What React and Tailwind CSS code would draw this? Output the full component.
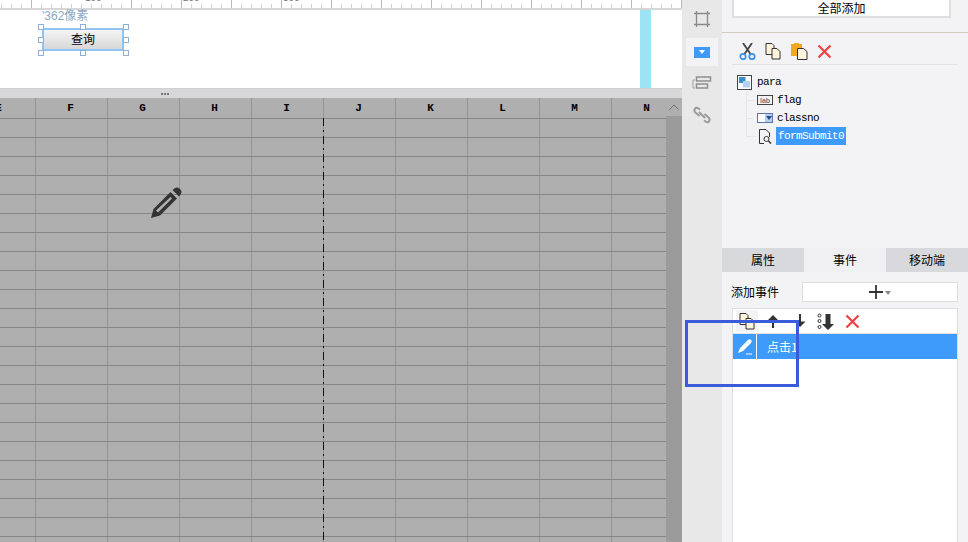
const COLS = ['E', 'F', 'G', 'H', 'I', 'J', 'K', 'L', 'M', 'N']
const ROWS = Array.from({ length: 23 }, (_, i) => i)
const mono = 'font-["Liberation_Mono","Noto_Sans_CJK_SC",monospace]'

function Ruler() {
  const ticks = Array.from({ length: 69 }, (_, i) => i * 10 + 1)
  return (
    <div className="h-[10px] shrink-0 bg-white border-b-2 border-[#d6d6d8]">
      <svg width="682" height="8" className="block">
        {ticks.map((x) => {
          const major = (x - 31) % 50 === 0 && x !== 81
          return <line key={x} x1={x + 0.5} x2={x + 0.5} y1={major ? 0 : 4} y2="8" stroke={major ? '#b8b8b8' : '#d2d2d2'} />
        })}
        <text x="85" y="1" fontSize="10" fill="#777" fontFamily="Liberation Sans">100</text>
        <text x="183" y="1" fontSize="10" fill="#777" fontFamily="Liberation Sans">200</text>
        <text x="283" y="1" fontSize="10" fill="#777" fontFamily="Liberation Sans">300</text>
      </svg>
    </div>
  )
}

function Handle({ className }) {
  return <span className={`absolute w-[6px] h-[6px] bg-white border border-[#8fb0d0] ${className}`} />
}

function QueryButton() {
  return (
    <div className="relative w-[82px] h-[23px] border-2 border-[#90c4f4] bg-gradient-to-b from-[#f4f4f4] to-[#d8d8d8] flex items-center justify-center pb-[2px] text-[12px] text-black font-['Noto_Sans_CJK_SC',sans-serif]">
      查询
      <Handle className="-left-[6px] -top-[6px]" />
      <Handle className="left-[36px] -top-[6px]" />
      <Handle className="-right-[7px] -top-[6px]" />
      <Handle className="-left-[6px] top-[7px]" />
      <Handle className="-right-[7px] top-[7px]" />
      <Handle className="-left-[6px] -bottom-[7px]" />
      <Handle className="left-[36px] -bottom-[7px]" />
      <Handle className="-right-[7px] -bottom-[7px]" />
    </div>
  )
}

function Sheet() {
  return (
    <div className="flex-1 min-h-0 flex bg-[#afafaf] relative">
      <div className="w-[666px] overflow-hidden">
        <div className="-ml-[36px] w-max">
          <div className={`flex h-[21px] border-b border-[#868686] text-[11px] text-black ${mono}`}>
            {COLS.map((c) => (
              <div key={c} className="w-[72px] shrink-0 border-r border-[#959595] pr-[2px] flex items-center justify-center font-bold">{c}</div>
            ))}
          </div>
          {ROWS.map((r) => (
            <div key={r} className="flex h-[19px] border-b border-[#868686]">
              {COLS.map((c) => (
                <div key={c} className="w-[72px] shrink-0 border-r border-[#959595]" />
              ))}
            </div>
          ))}
        </div>
      </div>
      <div className="w-[16px] flex flex-col bg-[#9b9b9b]">
        <div className="h-[18px] bg-[#afafaf] flex items-center justify-center">
          <svg width="10" height="6" viewBox="0 0 10 6"><path d="M0.5 5.5 5 1l4.5 4.5" fill="none" stroke="#6f6f6f" /></svg>
        </div>
      </div>
      <div className="absolute left-[323px] top-[20px] bottom-0 w-px bg-[repeating-linear-gradient(to_bottom,#111_0,#111_8px,transparent_8px,transparent_12px,#111_12px,#111_14px,transparent_14px,transparent_18px)]" />
      <svg className="absolute left-[150px] top-[89px]" width="32" height="32" viewBox="0 0 32 32">
        <path fill="#333" fillRule="evenodd" d="M1 31 3.500 22 20.500 5 27 11.500 10 28.500ZM6 23.500 8 25.500 22 11.500 20.500 10ZM22.500 3 25 1C27 0 28.500 0.500 30 2 31.500 3.500 32 5 31 7L29 9.500Z" />
      </svg>
    </div>
  )
}

function Rail() {
  return (
    <div className="w-[40px] shrink-0 bg-[#e8e8e8] flex flex-col items-center">
      <div className="h-[38px] w-full flex items-center justify-center">
        <svg width="16" height="16" viewBox="0 0 16 16" fill="none" stroke="#8a8a8a" strokeWidth="1.300">
          <path d="M2.500 0v16M13.500 0v16M0 2.500h16M0 13.500h16" />
        </svg>
      </div>
      <div className="h-[28px] w-[32px] bg-[#f3f3f6] flex items-center justify-center">
        <div className="w-[16px] h-[11px] bg-[#3f9bfb] flex items-center justify-center">
          <svg width="6" height="4" viewBox="0 0 6 4"><path d="M0 0h6L3 4Z" fill="#fff" /></svg>
        </div>
      </div>
      <div className="h-[34px] w-full flex items-center justify-center">
        <svg width="20" height="14" viewBox="0 0 20 14" fill="none">
          <path d="M3 4H1v8h2" stroke="#a0a0a0" />
          <rect x="4.500" y="1" width="14" height="4" stroke="#8f8f8f" strokeWidth="1.500" />
          <rect x="4.500" y="8" width="11" height="4" stroke="#8f8f8f" strokeWidth="1.500" />
        </svg>
      </div>
      <div className="h-[30px] w-full flex items-center justify-center">
        <svg width="18" height="18" viewBox="0 0 18 18" fill="none" stroke="#9a9a9a" strokeWidth="2">
          <path d="M7 3.500 5.500 2.500C4 1.500 2.500 1.500 1.800 3 1 4.500 1.500 6 3 7l3.500 3" />
          <path d="M11 14.500 12.500 15.500C14 16.500 15.500 16.500 16.200 15 17 13.500 16.500 12 15 11L11.500 8" />
          <path d="M6 6l6 6" />
        </svg>
      </div>
    </div>
  )
}

function Copy() {
  return (
    <svg width="17" height="17" viewBox="0 0 17 17">
      <path d="M1 .5h6l2 2v9H1Z" fill="#fff4dc" stroke="#333" />
      <path d="M7 5.500h5l3 3v7.500H7Z" fill="#fff4dc" stroke="#333" />
    </svg>
  )
}

function Cross({ size = 15 }) {
  return (
    <svg width={size} height={size} viewBox="0 0 15 15">
      <path d="M1.500 1.500l12 12M13.500 1.500l-12 12" stroke="#ee4444" strokeWidth="2.300" />
    </svg>
  )
}

function ObjectPanel() {
  return (
    <div className="h-[248px] shrink-0">
      <div className="h-[33px] border-b border-[#cfcbc0] pl-[10px]">
        <div className="w-[219px] h-[18px] bg-white border-2 border-t-0 border-[#dedede] flex items-center justify-center text-[12px] text-black font-['Noto_Sans_CJK_SC',sans-serif]">全部添加</div>
      </div>
      <div className="mx-[10px] h-[32px] pt-[10px] pl-[7px] flex items-start gap-[9px] border-b border-[#e2e2e4] w-[226px]">
        <svg width="17" height="17" viewBox="0 0 17 17" fill="none">
          <path d="M4 0l7.500 11M13 0 5.500 11" stroke="#444" strokeWidth="1.800" />
          <circle cx="4" cy="13.500" r="2.700" stroke="#3b8fe8" strokeWidth="1.700" />
          <circle cx="13" cy="13.500" r="2.700" stroke="#3b8fe8" strokeWidth="1.700" />
        </svg>
        <Copy />
        <svg width="17" height="17" viewBox="0 0 17 17">
          <path d="M0 1h3V0h5v1h3v12H0Z" fill="#f2a91e" />
          <path d="M6.500 5.500h6l3.500 3v8H6.500Z" fill="#fff4dc" stroke="#333" />
        </svg>
        <div className="pt-[1px]"><Cross /></div>
      </div>
      <div className={`relative pl-[15px] pt-[8px] text-[11px] tracking-[-0.6px] text-black ${mono}`}>
        <div className="h-[18px] flex items-center gap-[4px]">
          <svg width="16" height="15" viewBox="0 0 16 15">
            <rect x=".5" y=".5" width="14" height="14" fill="#fff" stroke="#444" />
            <rect x="2" y="2" width="6.500" height="6" fill="#3a8fc8" />
            <rect x="6" y="6" width="7" height="6.500" fill="#b4d0f0" />
          </svg>
          <span>para</span>
        </div>
        <div className="h-[18px] flex items-center gap-[4px] pl-[20px]">
          <div className="w-[16px] h-[10px] border border-[#444] flex items-center justify-center text-[7px] tracking-normal leading-none text-[#777] font-bold font-['Liberation_Sans',sans-serif]">lab</div>
          <span>flag</span>
        </div>
        <div className="h-[18px] flex items-center gap-[4px] pl-[20px]">
          <div className="w-[16px] h-[10px] border border-[#5a78a8] flex bg-white">
            <div className="w-[7px]" />
            <div className="flex-1 bg-[#b4d0f0] flex items-center justify-center">
              <svg width="6" height="4" viewBox="0 0 6 4"><path d="M0 0h6L3 4Z" fill="#2a4a80" /></svg>
            </div>
          </div>
          <span>classno</span>
        </div>
        <div className="h-[18px] flex items-center gap-[4px] pl-[21px]">
          <svg width="14" height="15" viewBox="0 0 14 15" fill="none" stroke="#333">
            <path d="M6 14.500H1.500V.5H8l3.500 3.500v4" />
            <circle cx="8.500" cy="10" r="2.500" />
            <path d="M10.500 12l2.500 2.500" strokeWidth="1.500" />
          </svg>
          <span className="bg-[#3f9bfb] text-white h-[18px] leading-[18px] px-[2px] w-[70px]">formSubmit0</span>
        </div>
        <div className="absolute left-[24px] top-[26px] w-px h-[46px] bg-[#e6e6e8]" />
        <div className="absolute left-[24px] top-[35px] w-[8px] h-px bg-[#e6e6e8]" />
        <div className="absolute left-[24px] top-[53px] w-[8px] h-px bg-[#e6e6e8]" />
        <div className="absolute left-[24px] top-[71px] w-[10px] h-px bg-[#e6e6e8]" />
      </div>
    </div>
  )
}

function EventPanel() {
  return (
    <div className="flex-1 min-h-0 flex flex-col font-['Noto_Sans_CJK_SC',sans-serif] text-[12px] text-black">
      <div className="flex h-[24px] shrink-0">
        <div className="w-[82px] bg-[#d8d9dc] flex items-center justify-center">属性</div>
        <div className="w-[82px] bg-[#f0f0f2] flex items-center justify-center">事件</div>
        <div className="w-[82px] bg-[#d8d9dc] flex items-center justify-center">移动端</div>
      </div>
      <div className="h-[36px] shrink-0 pt-[4px] pl-[9px] pr-[10px] flex items-center justify-between">
        <span>添加事件</span>
        <div className="w-[156px] h-[20px] bg-white border border-[#dedede] flex items-center justify-center gap-[2px]">
          <svg width="14" height="14" viewBox="0 0 14 14"><path d="M7 0v14M0 7h14" stroke="#333" strokeWidth="1.800" /></svg>
          <svg width="6" height="4" viewBox="0 0 6 4" className="mt-[2px]"><path d="M0 0h6L3 4Z" fill="#888" /></svg>
        </div>
      </div>
      <div className="flex-1 min-h-0 ml-[10px] mr-[10px] bg-white border border-[#dedede] border-b-0">
        <div className="h-[25px] pl-[3px] flex items-center border-b border-[#e2e2e4]">
          <div className="w-[22px] h-[22px] bg-[#f3f3f6] flex items-center justify-center"><Copy /></div>
          <svg width="12" height="14" viewBox="0 0 12 14" className="ml-[9px]"><path d="M6 1l5.500 5.500H7V14H5V6.500H.5Z" fill="#333" /></svg>
          <svg width="12" height="14" viewBox="0 0 12 14" className="ml-[15px]"><path d="M6 13 11.500 7.500H7V0H5v7.500H.5Z" fill="#333" /></svg>
          <svg width="17" height="17" viewBox="0 0 17 17" className="ml-[11px]">
            <g fill="none" stroke="#333"><circle cx="2.500" cy="2.500" r="1.500" /><circle cx="2.500" cy="8" r="1.500" /><circle cx="2.500" cy="14" r="1.500" /></g>
            <path d="M11 17l6-6h-3.500V1h-5v10H5Z" fill="#333" />
          </svg>
          <div className="ml-[11px]"><Cross /></div>
        </div>
        <div className="h-[25px] bg-[#3f9bfb] flex text-white">
          <div className="w-[24px] border-r border-white flex items-center justify-center">
            <svg width="16" height="16" viewBox="0 0 16 16" fill="#fff">
              <path d="M1 14 3 9 10.500 1.500C12 0 13 0 14 1 15 2 15 3 13.500 4.500L6 12Z" />
              <path d="M9 14.500h6v1H9Z" />
            </svg>
          </div>
          <span className="pl-[10px] leading-[25px]">点击1</span>
        </div>
      </div>
    </div>
  )
}

export default function App() {
  return (
    <div className="relative w-[968px] h-[542px] overflow-hidden flex bg-white">
      <div className="w-[682px] shrink-0 flex flex-col">
        <Ruler />
        <div className="h-[78px] shrink-0 flex bg-white">
          <div className="w-[640px] pl-[42px]">
            <div className="h-[18px] text-[12px] leading-[12px] text-[#8aa8c4] font-['Liberation_Sans','Noto_Sans_CJK_SC',sans-serif]">'362像素</div>
            <QueryButton />
          </div>
          <div className="w-[11px] bg-[#9ce3f5]" />
        </div>
        <div className="h-[10px] shrink-0 bg-[#d8d8da] flex items-center gap-[1px] pl-[161px] border-t border-[#cfcfd1]">
          <span className="w-[2px] h-[2px] bg-[#777]" />
          <span className="w-[2px] h-[2px] bg-[#777]" />
          <span className="w-[2px] h-[2px] bg-[#777]" />
        </div>
        <Sheet />
      </div>
      <Rail />
      <div className="flex-1 flex flex-col bg-[#f3f3f6]">
        <ObjectPanel />
        <EventPanel />
      </div>
      <div className="absolute left-[685px] top-[320px] w-[114px] h-[67px] border-[3px] border-[#3a5bdc]" />
    </div>
  )
}
